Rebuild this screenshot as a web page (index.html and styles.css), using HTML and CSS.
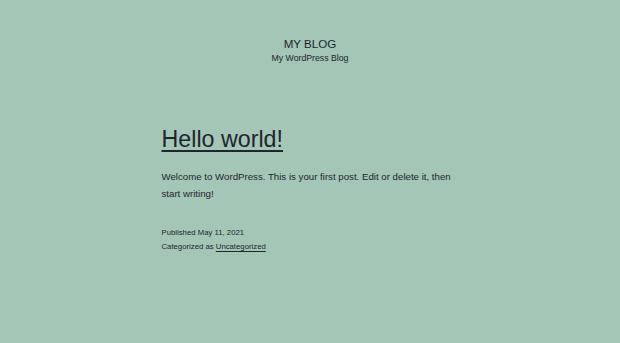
FILE: index.html
```html
<!DOCTYPE html>
<html lang="en">
<head>
<meta charset="utf-8">
<title>My Blog – My WordPress Blog</title>
<link rel="stylesheet" href="styles.css">
</head>
<body>
<div class="site">
  <header class="site-header">
    <p class="site-title">My Blog</p>
    <p class="site-description">My WordPress Blog</p>
  </header>
  <main class="site-main">
    <article class="post">
      <h2 class="entry-title"><a href="#">Hello world!</a></h2>
      <div class="entry-content">
        <p>Welcome to WordPress. This is your first post. Edit or delete it, then start writing!</p>
      </div>
      <footer class="entry-footer">
        <span class="posted-on">Published May 11, 2021</span>
        <span class="cat-links">Categorized as <a href="#">Uncategorized</a></span>
      </footer>
    </article>
  </main>
</div>
</body>
</html>
```
FILE: styles.css
```css
html, body {
  margin: 0;
  padding: 0;
}
body {
  background: #a3c6b7;
  color: #1f252e;
  font-family: "Liberation Sans", Arial, Helvetica, sans-serif;
  font-size: 9.69px;
  line-height: 1.7;
  height: 343px;
  overflow: hidden;
}
a {
  color: #1f252e;
  text-decoration: underline;
  text-decoration-thickness: 1px;
  text-underline-offset: 1.5px;
}
.site {
  display: flex;
  flex-direction: column;
}
.site-header {
  padding-top: 37.4px;
  text-align: center;
}
.site-title {
  margin: 0;
  font-size: 11.62px;
  line-height: 14.5px;
  text-transform: uppercase;
}
.site-description {
  margin: 0;
  font-size: 8.72px;
  line-height: 12px;
}
.site-main {
  width: 300px;
  margin: 0 auto;
  padding-left: 3px;
}
.entry-title {
  margin: 60px 0 0;
  font-size: 23.25px;
  font-weight: normal;
  line-height: 30.2px;
}
.entry-title a {
  text-decoration-thickness: 1.5px;
  text-underline-offset: 3px;
}
.entry-content p {
  margin: 15.3px 0 0;
}
.entry-footer {
  display: flex;
  flex-direction: column;
  margin-top: 24px;
  font-size: 7.75px;
  line-height: 13.2px;
}
```
